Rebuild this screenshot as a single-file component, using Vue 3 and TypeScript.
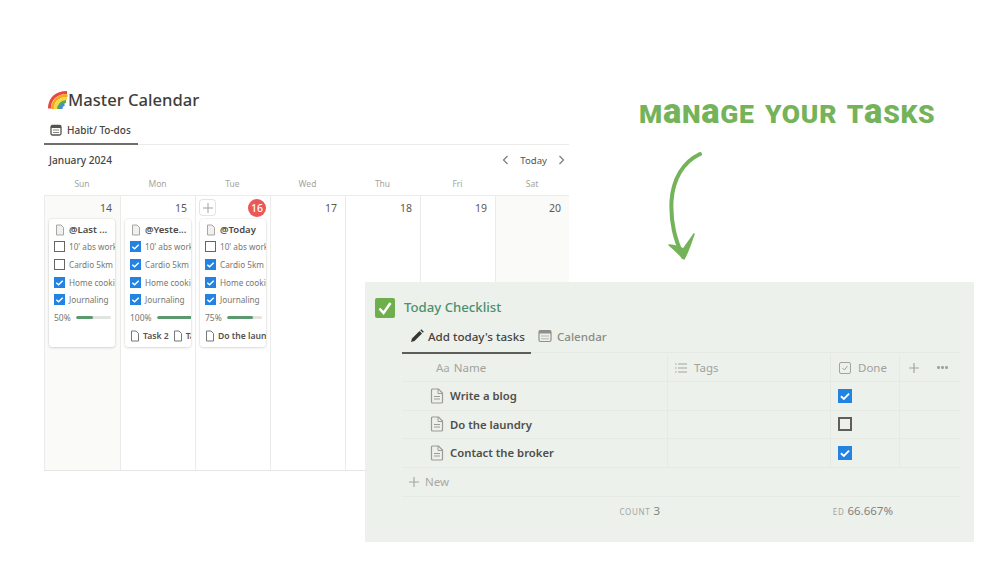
<template>
  <div class="slide">
    <!-- calendar window -->
    <section class="calendar">
      <h1 class="cal-title">
        <svg class="rainbow" viewBox="0 0 20 18" width="20" height="18">
          <path d="M1.500 17.500C1.500 8 8 1.500 19 1.500" stroke="#e8483f" />
          <path d="M4.500 18C4.500 10 10 4.500 19.500 4.500" stroke="#f5a623" />
          <path d="M7.500 18C7.500 12 12 7.500 19 7.500" stroke="#f7d83c" />
          <path d="M10.500 18C10.500 14 14 10.500 18 10.500" stroke="#58a84f" />
          <path d="M13 18C13 15.500 14.500 13.500 16.500 13.500" stroke="#3f8fd8" />
        </svg>
        <span>Master Calendar</span>
      </h1>
      <div class="cal-tabs">
        <div class="cal-tab">
          <svg viewBox="0 0 12 12" width="12" height="12" class="tab-icon">
            <rect x="1" y="1.500" width="10" height="9.500" rx="1.500" fill="none" stroke="#55534e" stroke-width="1.300" />
            <rect x="1" y="1.500" width="10" height="2.500" fill="#55534e" />
            <path d="M3 6h6M3 8.500h6" stroke="#8a8883" stroke-width="1" />
          </svg>
          Habit/ To-dos
        </div>
      </div>
      <div class="cal-bar">
        <span class="month">January 2024</span>
        <div class="cal-nav">
          <svg viewBox="0 0 10 10" width="10" height="10"><path d="M6.500 1L2.500 5l4 4" /></svg>
          <span>Today</span>
          <svg viewBox="0 0 10 10" width="10" height="10"><path d="M3.500 1l4 4-4 4" /></svg>
        </div>
      </div>
      <div class="week-names">
        <span v-for="d in weekNames" :key="d">{{ d }}</span>
      </div>
      <div class="week">
        <div v-for="day in days" :key="day.num" class="day" :class="{ weekend: day.weekend }">
          <div class="day-head">
            <span v-if="day.today" class="add-btn">
              <svg viewBox="0 0 12 12" width="12" height="12"><path d="M6 1v10M1 6h10" /></svg>
            </span>
            <span class="day-num" :class="{ today: day.today }">{{ day.num }}</span>
          </div>
          <article v-if="day.card" class="card">
            <div class="card-title">
              <svg class="doc-sm" viewBox="0 0 10 12" width="10" height="12">
                <path d="M1.500 1h4.500l2.500 2.500V11h-7z" fill="#f1f0ee" stroke="#a8a7a3" />
              </svg>
              <span>{{ day.card.title }}</span>
            </div>
            <div v-for="h in day.card.habits" :key="h.label" class="habit">
              <span class="box" :class="{ on: h.done }">
                <svg v-if="h.done" viewBox="0 0 12 12"><path d="M2.500 6.200l2.500 2.300 4.500-4.500" /></svg>
              </span>
              <span class="habit-label">{{ h.label }}</span>
            </div>
            <div class="progress">
              <span class="pct">{{ day.card.pct }}%</span>
              <span class="track"><i class="fill" :style="{ width: day.card.pct + '%' }"></i></span>
            </div>
            <div v-if="day.card.tasks.length" class="card-tasks">
              <span v-for="t in day.card.tasks" :key="t" class="card-task">
                <svg viewBox="0 0 10 12" width="10" height="12">
                  <path d="M1.500 1h4.500l2.500 2.500V11h-7z" fill="none" stroke="#777" />
                </svg>
                {{ t }}
              </span>
            </div>
          </article>
        </div>
      </div>
    </section>

    <!-- headline and arrow -->
    <h2 class="headline">M<span class="uni">a</span>N<span class="uni">a</span>GE YOUR T<span class="uni">a</span>SKS</h2>
    <svg class="arrow" viewBox="0 0 40 112" width="40" height="112">
      <path d="M35 5C18 13 8 30 6.500 52C5.500 74 10 90 18 108" fill="none" stroke="#74b359" stroke-width="4" stroke-linecap="round" />
      <path d="M4 96C10 101 14 105 19 110C23 103 26 94 29 85C25 91 21 96 18.500 100C14 98 9 96 4 96Z" fill="#74b359" stroke="#74b359" stroke-width="1.500" stroke-linejoin="round" />
    </svg>

    <!-- checklist window -->
    <section class="checklist">
      <div class="check-title">
        <svg viewBox="0 0 20 20" width="20" height="20">
          <rect width="20" height="20" rx="2" fill="#6fae4d" />
          <path d="M4.500 10.500l4 4.500 7-10" fill="none" stroke="#fff" stroke-width="2.600" />
        </svg>
        <span>Today Checklist</span>
      </div>
      <div class="check-body">
        <div class="check-tabs">
          <div class="check-tab active">
            <svg viewBox="0 0 14 14" width="14" height="14">
              <path d="M1 13l1-3.500 7.500-7.500 2.500 2.500L4.500 12z" fill="#37352f" />
              <path d="M10.300 1.200l1-1 2.500 2.500-1 1z" fill="#37352f" />
            </svg>
            Add today's tasks
          </div>
          <div class="check-tab">
            <svg viewBox="0 0 14 14" width="14" height="14">
              <rect x="1" y="1.500" width="12" height="11" rx="1.500" fill="none" stroke="#8f908c" stroke-width="1.200" />
              <rect x="1" y="1.500" width="12" height="3" fill="#8f908c" />
              <path d="M3 7h8M3 9.800h8" stroke="#b4b5b0" />
            </svg>
            Calendar
          </div>
        </div>
        <div class="row head">
          <div class="c-name"><span class="aa">Aa</span> Name</div>
          <div class="c-tags">
            <svg viewBox="0 0 14 14" width="14" height="14">
              <path d="M4 3h9M4 7h9M4 11h9" stroke="#a3a4a0" stroke-width="1.200" />
              <path d="M1 3h1.500M1 7h1.500M1 11h1.500" stroke="#a3a4a0" stroke-width="1.200" />
            </svg>
            Tags
          </div>
          <div class="c-done">
            <svg viewBox="0 0 14 14" width="14" height="14">
              <rect x="1.500" y="1.500" width="11" height="11" rx="1.500" fill="none" stroke="#a3a4a0" />
              <path d="M4.500 7l2 2 3-4" fill="none" stroke="#a3a4a0" />
            </svg>
            Done
          </div>
          <div class="c-extra">
            <svg viewBox="0 0 12 12" width="12" height="12"><path d="M6 1v10M1 6h10" stroke="#a3a4a0" stroke-width="1.200" /></svg>
            <span class="dots"><i></i><i></i><i></i></span>
          </div>
        </div>
        <div v-for="t in tasks" :key="t.name" class="row">
          <div class="c-name task">
            <svg viewBox="0 0 14 16" width="14" height="16">
              <path d="M2 1h6.500L12.500 5v9a1 1 0 0 1-1 1h-9a1 1 0 0 1-1-1V2a1 1 0 0 1 1-1z" fill="none" stroke="#9b9c97" stroke-width="1.200" />
              <path d="M8 1v4.500h4.500M4 8.500h6M4 11h6" fill="none" stroke="#9b9c97" />
            </svg>
            <span>{{ t.name }}</span>
          </div>
          <div class="c-tags"></div>
          <div class="c-done">
            <span class="box big" :class="{ on: t.done }">
              <svg v-if="t.done" viewBox="0 0 12 12"><path d="M2.500 6.200l2.500 2.300 4.500-4.500" /></svg>
            </span>
          </div>
          <div class="c-extra"></div>
        </div>
        <div class="new-row">
          <svg viewBox="0 0 12 12" width="12" height="12"><path d="M6 1v10M1 6h10" stroke="#a3a4a0" stroke-width="1.100" /></svg>
          New
        </div>
        <div class="totals">
          <div class="t-count"><small>COUNT</small> 3</div>
          <div class="t-done"><small>ED</small> 66.667%</div>
        </div>
      </div>
    </section>
  </div>
</template>

<script setup lang="ts">
interface Habit {
  label: string
  done: boolean
}

interface Card {
  title: string
  habits: Habit[]
  pct: number
  tasks: string[]
}

interface Day {
  num: number
  weekend?: boolean
  today?: boolean
  card?: Card
}

const weekNames = ['Sun', 'Mon', 'Tue', 'Wed', 'Thu', 'Fri', 'Sat']

const habits = (a: boolean, b: boolean, c: boolean, d: boolean): Habit[] => [
  { label: "10' abs workout", done: a },
  { label: 'Cardio 5km', done: b },
  { label: 'Home cooking', done: c },
  { label: 'Journaling', done: d },
]

const days: Day[] = [
  { num: 14, weekend: true, card: { title: '@Last ...', habits: habits(false, false, true, true), pct: 50, tasks: [] } },
  { num: 15, card: { title: '@Yeste...', habits: habits(true, true, true, true), pct: 100, tasks: ['Task 2', 'Task 3'] } },
  { num: 16, today: true, card: { title: '@Today', habits: habits(false, true, true, true), pct: 75, tasks: ['Do the laundry'] } },
  { num: 17 },
  { num: 18 },
  { num: 19 },
  { num: 20, weekend: true },
]

const tasks = [
  { name: 'Write a blog', done: true },
  { name: 'Do the laundry', done: false },
  { name: 'Contact the broker', done: true },
]
</script>

<style>
html,
body {
  margin: 0;
  background: #fff;
}
</style>

<style scoped>
.slide {
  position: relative;
  width: 1005px;
  height: 565px;
  overflow: hidden;
  background: #fff;
  color: #37352f;
  font-family: "Noto Sans", "Open Sans", sans-serif;
}

/* calendar */
.calendar {
  position: absolute;
  left: 44px;
  top: 87px;
  width: 525px;
}
.cal-title {
  display: flex;
  align-items: center;
  height: 25px;
  margin: 0 0 0 3px;
  font-size: 16.600px;
  font-weight: 500;
  color: #3f3e3a;
}
.rainbow {
  flex: none;
  margin-left: 1px;
}
.rainbow path {
  fill: none;
  stroke-width: 3;
}
.cal-tabs {
  height: 32px;
  border-bottom: 1px solid #ebebea;
}
.cal-tab {
  display: flex;
  align-items: center;
  gap: 4px;
  width: 88px;
  height: 27px;
  padding: 4px 0 0 6px;
  box-sizing: content-box;
  border-bottom: 2px solid #6f6e69;
  font-size: 10px;
  font-weight: 500;
  color: #45443f;
  white-space: nowrap;
}
.tab-icon {
  margin-right: 1px;
}
.cal-bar {
  display: flex;
  justify-content: space-between;
  align-items: center;
  height: 30px;
  padding: 0 3px 0 5px;
}
.month {
  font-size: 10.200px;
  font-weight: 500;
  color: #45443f;
}
.cal-nav {
  display: flex;
  align-items: center;
  gap: 9px;
  font-size: 9.600px;
  color: #55534e;
}
.cal-nav svg path {
  fill: none;
  stroke: #77766f;
  stroke-width: 1.100;
}
.week-names {
  display: grid;
  grid-template-columns: 76px repeat(5, 75px) 74px;
  height: 20px;
  border-bottom: 1px solid #ebebea;
  font-size: 8.500px;
  line-height: 18px;
  text-align: center;
  color: #a5a4a0;
}
.week {
  display: grid;
  grid-template-columns: 76px repeat(5, 75px) 74px;
  height: 274px;
  border-bottom: 1px solid #e6e6e4;
}
.day {
  box-sizing: border-box;
  border-left: 1px solid #ebebea;
  padding: 0 4px;
  min-width: 0;
}
.day.weekend {
  background: #fafaf9;
}
.day-head {
  display: flex;
  align-items: center;
  justify-content: space-between;
  height: 23px;
}
.day-num {
  margin-left: auto;
  margin-right: 4px;
  font-size: 10.500px;
  color: #5a5954;
}
.day-num.today {
  width: 18px;
  height: 18px;
  margin-right: 0;
  border-radius: 50%;
  background: #eb5757;
  color: #fff;
  font-weight: 500;
  line-height: 18px;
  text-align: center;
}
.add-btn {
  display: flex;
  align-items: center;
  justify-content: center;
  width: 15px;
  height: 15px;
  border-radius: 3px;
  box-shadow: 0 0 0 1px #e4e4e2;
}
.add-btn svg path {
  stroke: #a3a3a0;
  stroke-width: 1;
}
.card {
  box-sizing: border-box;
  width: 66px;
  height: 128px;
  padding: 2px 0 0 5px;
  overflow: hidden;
  border-radius: 3px;
  background: #fff;
  box-shadow: 0 0 0 0.500px rgba(15, 15, 15, 0.07), 0 1px 3px rgba(15, 15, 15, 0.12);
}
.card-title {
  display: flex;
  align-items: center;
  gap: 4px;
  height: 17px;
  padding-left: 1px;
  font-size: 9.500px;
  font-weight: 600;
  color: #4a4945;
  white-space: nowrap;
}
.habit {
  display: flex;
  align-items: center;
  gap: 4px;
  height: 17.700px;
  white-space: nowrap;
  font-size: 8.200px;
  color: #77766f;
}
.box {
  flex: none;
  display: inline-block;
  box-sizing: border-box;
  width: 11px;
  height: 11px;
  border: 1.500px solid #676661;
}
.box.on {
  border: none;
  background: #2383e2;
}
.box svg {
  display: block;
  width: 100%;
  height: 100%;
}
.box svg path {
  fill: none;
  stroke: #fff;
  stroke-width: 1.600;
}
.progress {
  display: flex;
  align-items: center;
  gap: 5px;
  height: 18px;
  font-size: 8.500px;
  color: #77766f;
}
.pct {
  flex: none;
}
.track {
  flex: none;
  width: 35px;
  height: 3px;
  border-radius: 2px;
  background: #e3e3e1;
  overflow: hidden;
}
.fill {
  display: block;
  height: 100%;
  border-radius: 2px;
  background: #5b9a6f;
}
.card-tasks {
  display: flex;
  gap: 4px;
  height: 18px;
  align-items: center;
  white-space: nowrap;
}
.card-task {
  display: inline-flex;
  align-items: center;
  gap: 3px;
  font-size: 8.600px;
  font-weight: 600;
  color: #55534e;
}

/* headline */
.headline {
  position: absolute;
  left: 639px;
  top: 98px;
  margin: 0;
  font-family: Roboto, sans-serif;
  font-size: 26.500px;
  line-height: 32px;
  font-weight: 900;
  letter-spacing: 0.700px;
  word-spacing: 3px;
  color: #74b359;
  white-space: nowrap;
}
.uni {
  font-size: 34.500px;
  line-height: 20px;
}
.arrow {
  position: absolute;
  left: 665px;
  top: 149px;
}

/* checklist */
.checklist {
  position: absolute;
  left: 365px;
  top: 282px;
  box-sizing: border-box;
  width: 609px;
  height: 260px;
  padding: 16px 0 0 10px;
  background: #edf1ec;
  color: #45443f;
}
.check-title {
  display: flex;
  align-items: center;
  gap: 9px;
  height: 20px;
  font-size: 13.200px;
  font-weight: 500;
  line-height: 18px;
  color: #4b8f6e;
}
.check-title span {
  margin-top: -2px;
}
.check-body {
  width: 558px;
  margin-left: 27px;
}
.check-tabs {
  display: flex;
  height: 33px;
  margin-top: 1px;
  border-bottom: 1px solid #e6eae5;
}
.check-tab {
  display: flex;
  align-items: center;
  gap: 5px;
  height: 33px;
  padding: 1px 7px 0;
  box-sizing: border-box;
  font-size: 11.600px;
  font-weight: 500;
  color: #8a8b86;
  white-space: nowrap;
}
.check-tab svg {
  flex: none;
}
.check-tab.active {
  box-sizing: content-box;
  height: 32px;
  width: 115px;
  gap: 4px;
  padding: 1px 6px 0 8px;
  border-bottom: 2px solid #5d5e59;
  color: #45443f;
}
.row {
  display: grid;
  grid-template-columns: 265px 163px 69px 61px;
  height: 28.500px;
  border-bottom: 1px solid #e6eae5;
  box-sizing: border-box;
}
.row.head {
  height: 28px;
  margin-top: 1px;
  font-size: 11.500px;
  color: #a0a19d;
}
.row > div {
  display: flex;
  align-items: center;
  min-width: 0;
}
.row > div + div {
  border-left: 1px solid #e6eae5;
}
.c-name {
  padding-left: 34px;
  gap: 4px;
}
.aa {
  color: #a8a9a5;
}
.c-tags {
  padding-left: 6px;
  gap: 6px;
}
.c-done {
  padding-left: 7px;
  gap: 6px;
}
.c-extra {
  padding-left: 8px;
  gap: 17px;
}
.dots {
  display: flex;
  gap: 1.500px;
}
.dots i {
  width: 2.500px;
  height: 2.500px;
  border-radius: 50%;
  background: #a3a4a0;
}
.row > .task {
  padding-left: 28px;
  gap: 6px;
  font-size: 11.300px;
  font-weight: 600;
  color: #4f4e4a;
}
.task svg {
  flex: none;
}
.box.big {
  width: 14px;
  height: 14px;
  border-width: 2px;
  border-color: #5f5e59;
}
.new-row {
  display: flex;
  align-items: center;
  gap: 5px;
  height: 28px;
  padding-left: 6px;
  border-bottom: 1px solid #e6eae5;
  font-size: 11.500px;
  color: #a7a8a4;
}
.totals {
  display: grid;
  grid-template-columns: 265px 163px 69px;
  height: 28px;
  align-items: center;
  font-size: 11.500px;
  color: #82837e;
  white-space: nowrap;
}
.totals small {
  font-size: 8px;
  letter-spacing: 0.700px;
  color: #a3a4a0;
}
.t-count {
  text-align: right;
  padding-right: 7px;
  grid-column: 1;
}
.t-done {
  grid-column: 3;
  text-align: right;
  padding-right: 6px;
}
</style>
